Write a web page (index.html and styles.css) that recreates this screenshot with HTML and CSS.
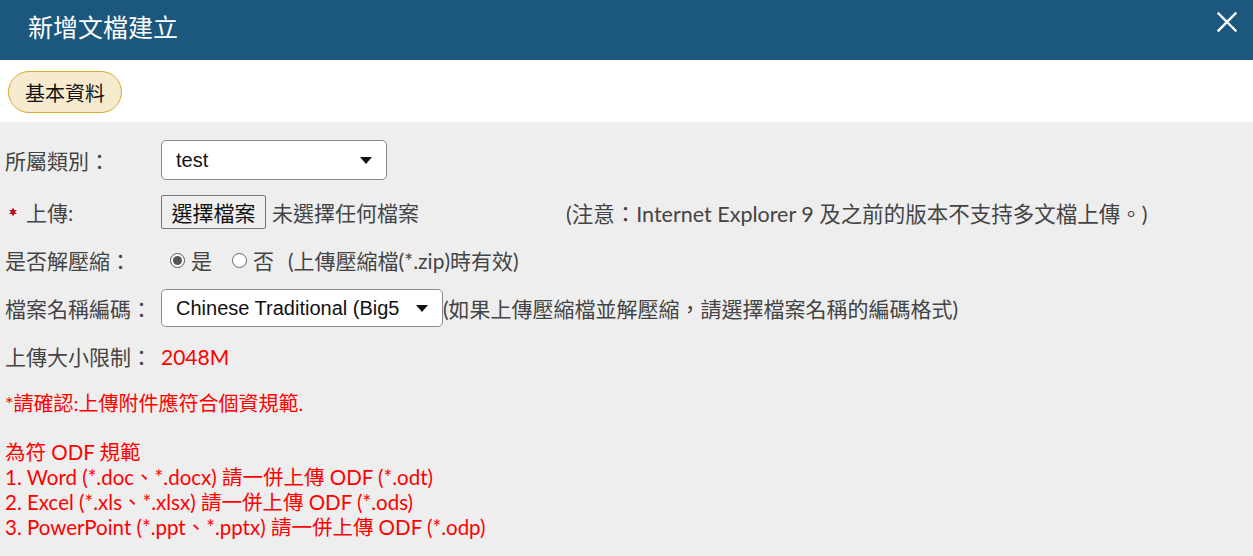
FILE: index.html
```html
<!DOCTYPE html>
<html lang="zh-Hant">
<head>
<meta charset="utf-8">
<title>新增文檔建立</title>
<link rel="stylesheet" href="styles.css">
</head>
<body>
<div class="dialog">
  <header class="dlg-header">
    <h1 class="dlg-title">新增文檔建立</h1>
    <button class="dlg-close" type="button" aria-label="關閉">
      <svg width="22" height="22" viewBox="0 0 22 22"><path d="M2.5 2.5 L19.5 19.5 M19.5 2.5 L2.5 19.5" stroke="#fff" stroke-width="2.4" stroke-linecap="square"/></svg>
    </button>
  </header>
  <div class="tabs">
    <span class="tab-pill">基本資料</span>
  </div>
  <form class="form-body">
    <div class="row row-first">
      <label class="lbl">所屬類別：</label>
      <div class="ctl">
        <div class="select-wrap sel-cat">
          <select class="sel"><option>test</option></select>
        </div>
      </div>
    </div>
    <div class="row row-upload">
      <label class="lbl"><svg class="star" width="10" height="10" viewBox="0 0 10 10"><path d="M5 0.5 L6.2 3 L9 3 L6.9 5 L9 7 L6.2 7 L5 9.5 L3.8 7 L1 7 L3.1 5 L1 3 L3.8 3 Z" fill="#b5121b"/></svg>上傳:</label>
      <div class="ctl">
        <button type="button" class="file-btn">選擇檔案</button>
        <span class="file-none">未選擇任何檔案</span>
        <span class="note">(注意：Internet Explorer 9 及之前的版本不支持多文檔上傳。)</span>
      </div>
    </div>
    <div class="row">
      <label class="lbl">是否解壓縮：</label>
      <div class="ctl radios">
        <label class="radio"><input type="radio" name="unzip" checked><span>是</span></label>
        <label class="radio"><input type="radio" name="unzip"><span>否</span></label>
        <span class="hint">(上傳壓縮檔(*.zip)時有效)</span>
      </div>
    </div>
    <div class="row">
      <label class="lbl">檔案名稱編碼：</label>
      <div class="ctl">
        <div class="select-wrap sel-enc">
          <select class="sel"><option>Chinese Traditional (Big5)</option></select>
        </div>
        <span class="hint tight">(如果上傳壓縮檔並解壓縮，請選擇檔案名稱的編碼格式)</span>
      </div>
    </div>
    <div class="row">
      <label class="lbl">上傳大小限制：</label>
      <div class="ctl"><span class="limit">2048M</span></div>
    </div>
    <p class="warn">*請確認:上傳附件應符合個資規範.</p>
    <div class="odf">
      <p>為符 ODF 規範</p>
      <p>1. Word (*.doc、*.docx) 請一併上傳 ODF (*.odt)</p>
      <p>2. Excel (*.xls、*.xlsx) 請一併上傳 ODF (*.ods)</p>
      <p>3. PowerPoint (*.ppt、*.pptx) 請一併上傳 ODF (*.odp)</p>
    </div>
  </form>
</div>
</body>
</html>
```

FILE: styles.css
```css
* { box-sizing: border-box; }
html, body {
  margin: 0;
  padding: 0;
  background: #eeeeee;
  font-family: Lato, "Noto Sans CJK TC", sans-serif;
}
.dialog {
  width: 1253px;
  min-height: 556px;
  background: #eeeeee;
}
.dlg-header {
  height: 60px;
  background: #1c577d;
  display: flex;
  align-items: center;
  justify-content: space-between;
  padding: 0 15px 0 28px;
}
.dlg-title {
  margin: 0;
  color: #fff;
  font-size: 25px;
  font-weight: 400;
  line-height: 1;
  margin-top: -6px;
}
.dlg-close {
  background: none;
  border: 0;
  padding: 0;
  width: 22px;
  height: 22px;
  margin-top: -16px;
  cursor: pointer;
}
.dlg-close svg { display: block; }
.tabs {
  height: 62px;
  background: #fff;
  padding: 11px 8px 0;
}
.tab-pill {
  display: inline-flex;
  align-items: center;
  justify-content: center;
  height: 42px;
  width: 114px;
  border: 1px solid #d7aa33;
  border-radius: 21px;
  background: #f6ebcf;
  color: #111;
  font-size: 20px;
}
.form-body {
  padding: 14px 0 0 5px;
  margin: 0;
}
.row {
  display: flex;
  align-items: center;
  height: 48px;
}
.row-upload { margin-top: 4px; }
.lbl {
  width: 156px;
  flex: none;
  color: #444;
  font-size: 21px;
  display: flex;
  align-items: center;
}
.star { margin: 0 8px 0 3px; }
.ctl {
  display: flex;
  align-items: center;
  color: #444;
  font-size: 21px;
  white-space: nowrap;
}
.select-wrap {
  position: relative;
  background: #fff;
  border: 1px solid #8a8a8a;
  border-radius: 5px;
}
.select-wrap::after {
  content: "";
  position: absolute;
  right: 14px;
  top: 50%;
  margin-top: -3px;
  border-left: 6px solid transparent;
  border-right: 6px solid transparent;
  border-top: 7px solid #111;
  pointer-events: none;
}
.sel-cat { width: 226px; height: 40px; }
.sel-enc { width: 282px; height: 38px; }
.sel {
  appearance: none;
  -webkit-appearance: none;
  border: 0;
  background: transparent;
  width: 100%;
  height: 100%;
  padding: 0 42px 0 14px;
  font-family: "Liberation Sans", Arial, sans-serif;
  font-size: 20px;
  color: #111;
  outline: none;
}
.file-btn {
  height: 34px;
  width: 105px;
  padding: 0;
  border: 1px solid #767676;
  border-radius: 2px;
  background: #efefef;
  color: #111;
  font-family: Lato, "Noto Sans CJK TC", sans-serif;
  font-size: 21px;
}
.file-none { margin-left: 6px; }
.note { margin-left: 147px; font-size: 21.5px; }
.radios { padding-left: 9px; }
.radio {
  display: inline-flex;
  align-items: center;
  margin-right: 20px;
}
.radio input {
  appearance: none;
  -webkit-appearance: none;
  width: 15px;
  height: 15px;
  margin: 0 6px 0 0;
  border: 1px solid #666;
  border-radius: 50%;
  background: #fff;
  position: relative;
}
.radio input:checked {
  border-color: #555;
}
.radio input:checked::after {
  content: "";
  position: absolute;
  left: 2px;
  top: 2px;
  width: 9px;
  height: 9px;
  border-radius: 50%;
  background: #555;
}
.hint { margin-left: -6px; }
.hint.tight { margin-left: 0; }
.limit { color: #ff0000; }
.warn {
  margin: 11px 0 0;
  color: #ff0000;
  font-size: 20px;
  line-height: 24px;
}
.odf {
  margin-top: 25px;
  color: #ff0000;
  font-size: 20.5px;
  line-height: 25px;
}
.odf p { margin: 0; }
```
